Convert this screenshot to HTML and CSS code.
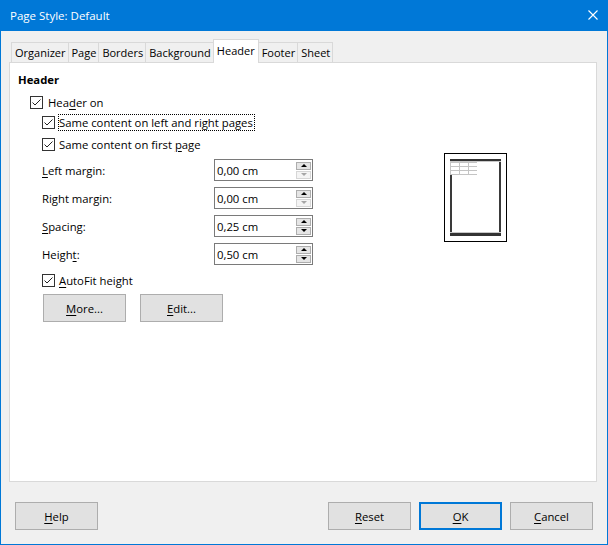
FILE: index.html
```html
<!DOCTYPE html>
<html>
<head>
<meta charset="utf-8">
<link rel="stylesheet" href="styles.css">
</head>
<body>
<div class="window">
  <div class="titlebar">
    <span class="title">Page Style: Default</span>
    <svg class="close" width="10" height="10" viewBox="0 0 10 10"><path d="M0.5 0.5 L9.5 9.5 M9.5 0.5 L0.5 9.5" stroke="#fff" stroke-width="1.1" fill="none"/></svg>
  </div>
  <div class="dlg">
    <div class="tabs">
      <div class="tab">Organizer</div>
      <div class="tab">Page</div>
      <div class="tab">Borders</div>
      <div class="tab">Background</div>
      <div class="tab active">Header</div>
      <div class="tab">Footer</div>
      <div class="tab">Sheet</div>
    </div>
    <div class="panel">
      <div class="col">
        <div class="section-title">Header</div>
        <div class="check r1">
          <span class="box"><svg width="11" height="11" viewBox="0 0 11 11"><path d="M1.5 5.5 L4 8 L9.5 2.5" stroke="#222" stroke-width="1" fill="none"/></svg></span>
          <span class="lbl">Hea<u>d</u>er on</span>
        </div>
        <div class="check r2">
          <span class="box"><svg width="11" height="11" viewBox="0 0 11 11"><path d="M1.5 5.5 L4 8 L9.5 2.5" stroke="#222" stroke-width="1" fill="none"/></svg></span>
          <span class="lbl focus">Same content on left and right pages</span>
        </div>
        <div class="check r3">
          <span class="box"><svg width="11" height="11" viewBox="0 0 11 11"><path d="M1.5 5.5 L4 8 L9.5 2.5" stroke="#222" stroke-width="1" fill="none"/></svg></span>
          <span class="lbl">Same content on first <u>p</u>age</span>
        </div>
        <div class="field f1">
          <span class="flabel"><u>L</u>eft margin:</span>
          <div class="spin"><span class="val">0,00 cm</span><span class="btns"><span class="sbtn"><i class="up"></i></span><span class="sbtn dis"><i class="down"></i></span></span></div>
        </div>
        <div class="field">
          <span class="flabel">Ri<u>g</u>ht margin:</span>
          <div class="spin"><span class="val">0,00 cm</span><span class="btns"><span class="sbtn"><i class="up"></i></span><span class="sbtn dis"><i class="down"></i></span></span></div>
        </div>
        <div class="field">
          <span class="flabel"><u>S</u>pacing:</span>
          <div class="spin"><span class="val">0,25 cm</span><span class="btns"><span class="sbtn"><i class="up"></i></span><span class="sbtn"><i class="down"></i></span></span></div>
        </div>
        <div class="field">
          <span class="flabel">Heigh<u>t</u>:</span>
          <div class="spin"><span class="val">0,50 cm</span><span class="btns"><span class="sbtn"><i class="up"></i></span><span class="sbtn"><i class="down"></i></span></span></div>
        </div>
        <div class="check r4">
          <span class="box"><svg width="11" height="11" viewBox="0 0 11 11"><path d="M1.5 5.5 L4 8 L9.5 2.5" stroke="#222" stroke-width="1" fill="none"/></svg></span>
          <span class="lbl"><u>A</u>utoFit height</span>
        </div>
        <div class="btnrow">
          <div class="btn"><span><u>M</u>ore...</span></div>
          <div class="btn"><span><u>E</u>dit...</span></div>
        </div>
      </div>
      <div class="preview">
        <div class="page">
          <div class="page-head"></div>
          <div class="grid">
            <span></span><span></span><span></span>
            <span></span><span></span><span></span>
            <span></span><span></span><span></span>
          </div>
          <div class="page-foot"></div>
        </div>
      </div>
    </div>
    <div class="footer">
      <div class="btn"><span><u>H</u>elp</span></div>
      <div class="spacer"></div>
      <div class="btn"><span><u>R</u>eset</span></div>
      <div class="btn ok"><span><u>O</u>K</span></div>
      <div class="btn"><span><u>C</u>ancel</span></div>
    </div>
  </div>
</div>
</body>
</html>
```

FILE: styles.css
```css
* { box-sizing: border-box; }
html, body { margin: 0; padding: 0; }
body {
  font-family: "Open Sans", "Noto Sans", sans-serif;
  font-size: 11.3px;
  color: #000;
  background: #f0f0f0;
}
u { text-decoration: underline; text-underline-offset: 2px; text-decoration-thickness: 1px; }

.window {
  width: 608px;
  height: 545px;
  border: 1px solid #0078d7;
  background: #f0f0f0;
  display: flex;
  flex-direction: column;
}
.titlebar {
  height: 30px;
  background: #0078d7;
  color: #fff;
  display: flex;
  align-items: center;
  justify-content: space-between;
  padding: 0 9px 0 9px;
  font-size: 11.5px;
}
.title { margin-top: -1px; }
.close { display: block; margin-top: -2px; }

.dlg { flex: 1; display: flex; flex-direction: column; padding-top: 8px; }

.tabs {
  display: flex;
  align-items: flex-end;
  height: 23px;
  margin-left: 10px;
  position: relative;
  z-index: 1;
  font-size: 11px;
}
.tab {
  height: 20px;
  line-height: 19px;
  padding: 0 2px 0 3px;
  border: 1px solid #d9d9d9;
  border-bottom: none;
  background: #f0f0f0;
  margin-left: -1px;
}
.tab:first-child { margin-left: 0; }
.tab.active {
  height: 24px;
  line-height: 22px;
  background: #fff;
  margin-bottom: -1px;
  padding: 0 3px;
  position: relative;
}

.panel {
  height: 420px;
  margin: 0 10px 0 8px;
  border: 1px solid #d9d9d9;
  background: #fff;
  display: flex;
  padding: 9px 0 0 8px;
}
.col { width: 300px; display: flex; flex-direction: column; }
.section-title { font-weight: bold; height: 16px; line-height: 16px; }

.check { display: flex; align-items: center; height: 19px; }
.check.r1 { margin-top: 5px; padding-left: 12px; }
.check.r2 { margin-top: 1px; padding-left: 24px; }
.check.r3 { margin-top: 3px; padding-left: 24px; }
.check.r4 { margin-top: 6px; padding-left: 24px; }
.box {
  width: 13px; height: 13px;
  border: 1px solid #333;
  background: #fff;
  display: block;
  flex: none;
}
.box svg { display: block; }
.lbl { margin-left: 5px; line-height: 15px; }
.r2 .lbl, .r3 .lbl, .r4 .lbl { margin-left: 4px; }
.lbl.focus {
  margin-left: 3px;
  border: 1px dotted #000;
  padding: 0 1px 0 0;
  line-height: 15px;
}

.field { display: flex; align-items: center; height: 22px; margin-top: 6px; padding-left: 24px; }
.field.f1 { margin-top: 5px; }
.flabel { width: 172px; }
.spin {
  width: 99px; height: 22px;
  border: 1px solid #7a7a7a;
  background: #fff;
  display: flex;
  align-items: center;
  padding: 0 1px 0 2px;
}
.val { flex: 1; }
.btns { display: flex; flex-direction: column; gap: 1px; }
.sbtn {
  width: 15px; height: 8px;
  border: 1px solid #adadad;
  background: #e5e5e5;
  display: flex; align-items: center; justify-content: center;
}
.sbtn.dis { border-color: #d6d6d6; background: #f4f4f4; }
.up { display: block; width: 0; height: 0; border-left: 3px solid transparent; border-right: 3px solid transparent; border-bottom: 3px solid #000; }
.down { display: block; width: 0; height: 0; border-left: 3px solid transparent; border-right: 3px solid transparent; border-top: 3px solid #000; }
.dis .down { border-top-color: #a6a6a6; }

.btnrow { display: flex; gap: 14px; margin-top: 4px; padding-left: 25px; }
.btn {
  width: 83px; height: 28px;
  border: 1px solid #adadad;
  background: #e1e1e1;
  display: flex; align-items: center; justify-content: center;
  line-height: 15px;
}
.btn span { margin-top: 1px; }
.btn.ok { border: 2px solid #0078d7; }

.preview {
  margin-left: 126px;
  margin-top: 81px;
  width: 63px; height: 89px;
  border: 1px solid #000;
  padding: 5px;
}
.page {
  width: 51px; height: 77px;
  border-left: 2px solid #3a3a3a;
  border-right: 2px solid #3a3a3a;
  display: flex; flex-direction: column;
}
.page-head { height: 3px; border-top: 2px solid #333; border-bottom: 1px solid #c8c8c8; margin: 0 -2px; }
.grid {
  margin-left: -2px;
  width: 27px;
  display: grid;
  grid-template-columns: repeat(3, 8px);
  grid-template-rows: repeat(3, 3px);
  gap: 1px;
  padding: 1px;
  background: #c4c4c4;
}
.grid span { background: #fff; }
.page-foot { margin: auto -2px 0; height: 4px; border-top: 1px solid #c8c8c8; border-bottom: 3px solid #333; }

.footer {
  display: flex;
  gap: 8px;
  margin-top: 20px;
  padding: 0 14px 0 14px;
}
.spacer { flex: 1; }
```
